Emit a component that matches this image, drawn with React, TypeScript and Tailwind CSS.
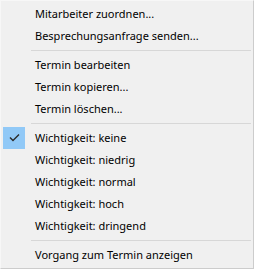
const groups: { label: string; checked?: boolean }[][] = [
  [{ label: 'Mitarbeiter zuordnen...' }, { label: 'Besprechungsanfrage senden...' }],
  [{ label: 'Termin bearbeiten' }, { label: 'Termin kopieren...' }, { label: 'Termin löschen...' }],
  [
    { label: 'Wichtigkeit: keine', checked: true },
    { label: 'Wichtigkeit: niedrig' },
    { label: 'Wichtigkeit: normal' },
    { label: 'Wichtigkeit: hoch' },
    { label: 'Wichtigkeit: dringend' },
  ],
  [{ label: 'Vorgang zum Termin anzeigen' }],
];

function CheckMark() {
  return (
    <svg width="22" height="22" viewBox="0 0 22 22">
      <path d="M7 10.5 L10 13.5 L16 7.5" fill="none" stroke="#2b2b2b" strokeWidth="1.4" />
    </svg>
  );
}

export default function App() {
  return (
    <div
      className="w-[254px] h-[269px] bg-[#f0f0f0] border border-t-[#f7f7f7] border-l-[#f7f7f7] border-r-[#cccccc] border-b-[#cccccc] py-[2px] text-[11px] text-black"
      style={{ fontFamily: '"Noto Sans", "Open Sans", sans-serif' }}
    >
      {groups.map((items, gi) => (
        <div key={gi}>
          {gi > 0 && (
            <div className="h-[7px] flex items-center pl-[30px] pr-[2px]">
              <div className="h-px w-full bg-[#d7d7d7]" />
            </div>
          )}
          {items.map((item) => (
            <div key={item.label} className="h-[22px] flex items-center pl-[2px]">
              <div
                className={
                  'w-[22px] h-[22px] flex items-center justify-center ' +
                  (item.checked ? 'bg-[#91c9f7]' : '')
                }
              >
                {item.checked && <CheckMark />}
              </div>
              <span className="ml-[10px] leading-[22px] whitespace-nowrap">{item.label}</span>
            </div>
          ))}
        </div>
      ))}
    </div>
  );
}
